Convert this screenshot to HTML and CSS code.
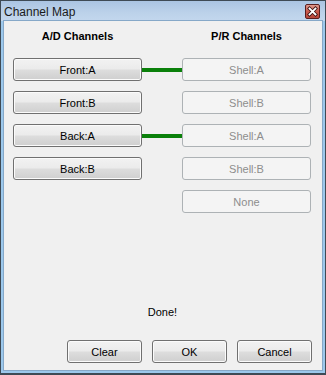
FILE: index.html
```html
<!DOCTYPE html>
<html lang="en">
<head>
  <meta charset="UTF-8" />
  <meta name="viewport" content="width=device-width, initial-scale=1.0" />
  <title>Channel Map</title>
  <link rel="stylesheet" href="styles.css">
</head>
<body>
  <div class="window">
    <div class="titlebar">
      <span class="title">Channel Map</span>
      <span class="close-btn">
        <svg width="13" height="13" viewBox="0 0 13 13">
          <path d="M3.5 3.5 L9.5 9.5 M9.5 3.5 L3.5 9.5" stroke="#3a1010" stroke-width="3.4" stroke-linecap="square" />
          <path d="M3.5 3.5 L9.5 9.5 M9.5 3.5 L3.5 9.5" stroke="#ffffff" stroke-width="1.8" stroke-linecap="square" />
        </svg>
      </span>
    </div>

    <div class="client">
      <div class="map-grid">
        <div class="col-head">A/D Channels</div>
        <div></div>
        <div class="col-head">P/R Channels</div>
      </div>

      <!-- channel rows: left button, link, right button -->
      <div class="map-grid rows">
        <button class="btn">Front:A</button>
        <div class="link on"></div>
        <button class="btn" disabled>Shell:A</button>

        <button class="btn">Front:B</button>
        <div class="link"></div>
        <button class="btn" disabled>Shell:B</button>

        <button class="btn">Back:A</button>
        <div class="link on"></div>
        <button class="btn" disabled>Shell:A</button>

        <button class="btn">Back:B</button>
        <div class="link"></div>
        <button class="btn" disabled>Shell:B</button>

        <div></div>
        <div class="link"></div>
        <button class="btn" disabled>None</button>
      </div>

      <div class="status">Done!</div>

      <div class="footer">
        <button class="btn">Clear</button>
        <button class="btn">OK</button>
        <button class="btn">Cancel</button>
      </div>
    </div>
  </div>
</body>
</html>
```

FILE: styles.css
```css
body {
  margin: 0;
  font-family: "Liberation Sans", Arial, sans-serif;
  background: #ffffff;
}

.window {
  width: 326px;
  height: 375px;
  box-sizing: border-box;
  border: 1px solid #3e4a55;
  border-bottom-width: 2px;
  background: #9cc8ec;
  display: flex;
  flex-direction: column;
}

.titlebar {
  height: 20px;
  display: flex;
  align-items: center;
  justify-content: space-between;
  padding: 0 5px 0 3px;
  background: linear-gradient(#aac4e2, #bcd2ea 60%, #c3d7ee);
}

.title {
  font-size: 12px;
  color: #1a1a1a;
  padding-top: 1px;
}

.close-btn {
  width: 13px;
  height: 13px;
  border: 1px solid #5a1e1e;
  border-radius: 2px;
  background: linear-gradient(#e09a8e, #c95a4c 50%, #b8463a);
  display: flex;
}

.client {
  flex: 1;
  margin: 0 3px 3px 3px;
  background: #f0f0f0;
  box-shadow: 0 0 0 1px #86a8c8;
  padding: 9px 10px 7px 9px;
  display: flex;
  flex-direction: column;
}

.map-grid {
  display: grid;
  grid-template-columns: 129px 40px 129px;
}

.col-head {
  text-align: center;
  font-size: 11px;
  font-weight: bold;
  line-height: 13px;
  color: #000;
}

.rows {
  margin-top: 15px;
  grid-auto-rows: 23px;
  row-gap: 10px;
}

.link {
  display: flex;
  align-items: center;
}

.link.on::before {
  content: "";
  display: block;
  width: 100%;
  height: 4px;
  background: #0a800a;
}

.btn {
  height: 23px;
  margin: 0;
  padding: 0;
  font-family: "Liberation Sans", Arial, sans-serif;
  font-size: 11px;
  color: #000;
  border: 1px solid #707070;
  border-radius: 3px;
  background: linear-gradient(#f2f2f2 0%, #ebebeb 48%, #dddddd 52%, #cfcfcf 100%);
  box-shadow: inset 0 0 0 1px #fbfbfb;
}

.btn:disabled {
  color: #8d8d8d;
  border-color: #adb2b5;
  background: #f4f4f4;
  box-shadow: none;
}

.status {
  margin-top: auto;
  text-align: center;
  font-size: 11px;
  line-height: 13px;
  color: #000;
}

.footer {
  margin-top: 21px;
  display: flex;
  justify-content: flex-end;
  gap: 10px;
}

.footer .btn {
  width: 75px;
}
```
